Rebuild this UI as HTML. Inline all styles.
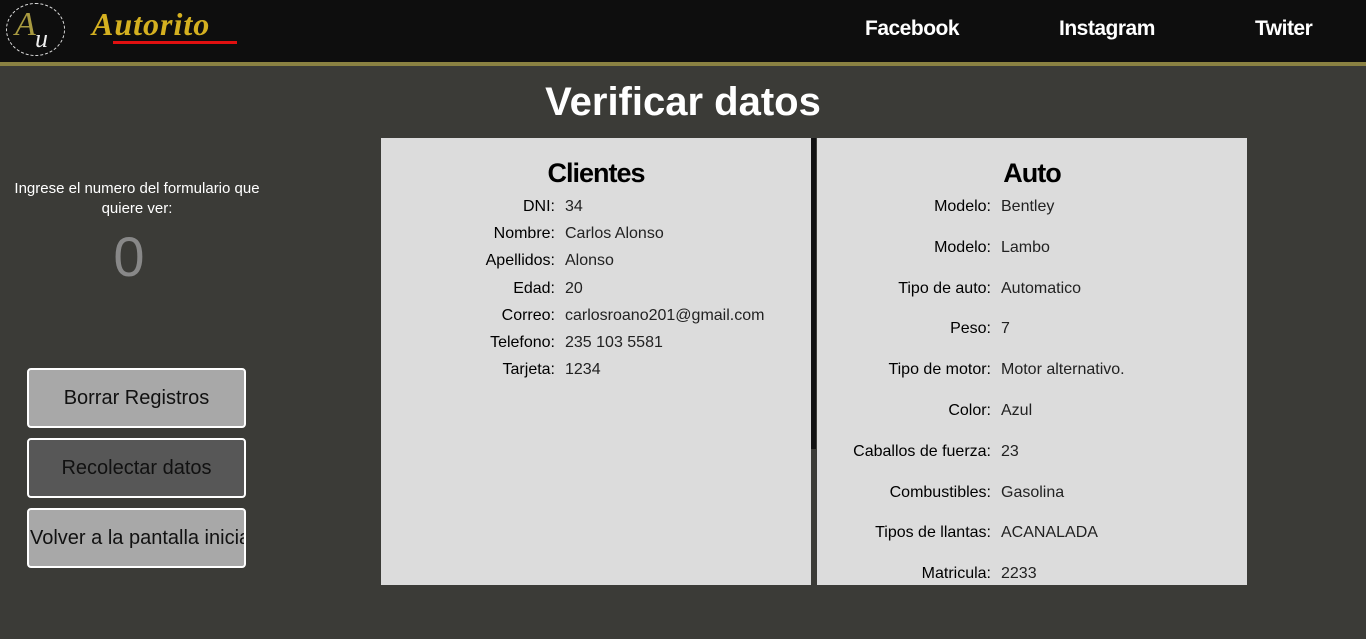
<!DOCTYPE html>
<html><head><meta charset="utf-8"><style>
*{margin:0;padding:0;box-sizing:border-box}
body{width:1366px;height:639px;background:#3b3b37;font-family:"Liberation Sans",sans-serif;position:relative;overflow:hidden}
.hdr{position:absolute;left:0;top:0;width:1366px;height:62px;background:#0e0e0e}
.gold{position:absolute;left:0;top:62px;width:1366px;height:4px;background:#8a8142}
.logo{position:absolute;left:6px;top:3px;width:59px;height:53px;border:1.5px dashed #ddd;border-radius:50%}
.brand{position:absolute;left:92px;top:6px;font-family:"Liberation Serif",serif;font-style:italic;font-weight:bold;font-size:32px;color:#d4b020;letter-spacing:1px}
.ul{position:absolute;left:113px;top:41px;width:124px;height:3px;background:#e01010}
.nav{position:absolute;top:17px;color:#fff;font-weight:bold;font-size:21px;letter-spacing:-0.5px}
h1{position:absolute;left:0;width:1366px;top:80px;text-align:center;color:#fff;font-size:40px;font-weight:bold}
.ing{position:absolute;left:0;width:274px;top:179px;text-align:center;color:#fff;font-size:15px;line-height:20px}
.zero{position:absolute;left:0;width:258px;top:224px;text-align:center;color:#888;font-size:56px}
.btn{position:absolute;left:27px;width:219px;height:60px;border:2px solid #fff;border-radius:4px;background:#a8a8a8;color:#111;font-size:20px;text-align:center;line-height:56px;white-space:nowrap;overflow:hidden}
.panel{position:absolute;top:138px;height:447px;background:#dcdcdc}
.ttl{position:absolute;width:100%;text-align:center;top:20px;font-size:27px;font-weight:bold;color:#000;letter-spacing:-1px}
.lb{position:absolute;text-align:right;font-size:16px;color:#000;white-space:nowrap;width:300px}
.vl{position:absolute;font-size:16px;color:#222;white-space:nowrap}
</style></head><body>
<div class="hdr"></div><div class="gold"></div>
<div class="logo"><span style="position:absolute;left:8px;top:2px;font-family:'Liberation Serif',serif;font-style:italic;font-size:34px;color:#a89a40">A</span><span style="position:absolute;left:28px;top:20px;font-family:'Liberation Serif',serif;font-style:italic;font-size:26px;color:#eee">u</span></div>
<div class="brand">Autorito</div><div class="ul"></div>
<div class="nav" style="left:865px">Facebook</div>
<div class="nav" style="left:1059px">Instagram</div>
<div class="nav" style="left:1255px">Twiter</div>
<h1>Verificar datos</h1>
<div class="ing">Ingrese el numero del formulario que<br>quiere ver:</div>
<div class="zero">0</div>
<div class="btn" style="top:368px">Borrar Registros</div>
<div class="btn" style="top:438px;background:#575757">Recolectar datos</div>
<div class="btn" style="top:508px;text-align:left;padding-left:1px">Volver a la pantalla inicial</div>
<div class="panel" style="left:381px;width:430px"><div class="ttl">Clientes</div></div>
<div style="position:absolute;left:811px;top:138px;width:5px;height:311px;background:#111"></div>
<div class="panel" style="left:817px;width:430px"><div class="ttl">Auto</div></div>
<div id="c"></div>
<script>
var L=[["DNI:","34"],["Nombre:","Carlos Alonso"],["Apellidos:","Alonso"],["Edad:","20"],["Correo:","carlosroano201@gmail.com"],["Telefono:","235 103 5581"],["Tarjeta:","1234"]];
var R=[["Modelo:","Bentley"],["Modelo:","Lambo"],["Tipo de auto:","Automatico"],["Peso:","7"],["Tipo de motor:","Motor alternativo."],["Color:","Azul"],["Caballos de fuerza:","23"],["Combustibles:","Gasolina"],["Tipos de llantas:","ACANALADA"],["Matricula:","2233"]];
var h="";
L.forEach(function(r,i){var y=198+i*27.2;h+='<div class="lb" style="top:'+y+'px;left:255px">'+r[0]+'</div><div class="vl" style="top:'+y+'px;left:565px">'+r[1]+'</div>';});
R.forEach(function(r,i){var y=198+i*40.8;h+='<div class="lb" style="top:'+y+'px;left:691px">'+r[0]+'</div><div class="vl" style="top:'+y+'px;left:1001px">'+r[1]+'</div>';});
document.getElementById("c").innerHTML=h;
</script>
</body></html>
